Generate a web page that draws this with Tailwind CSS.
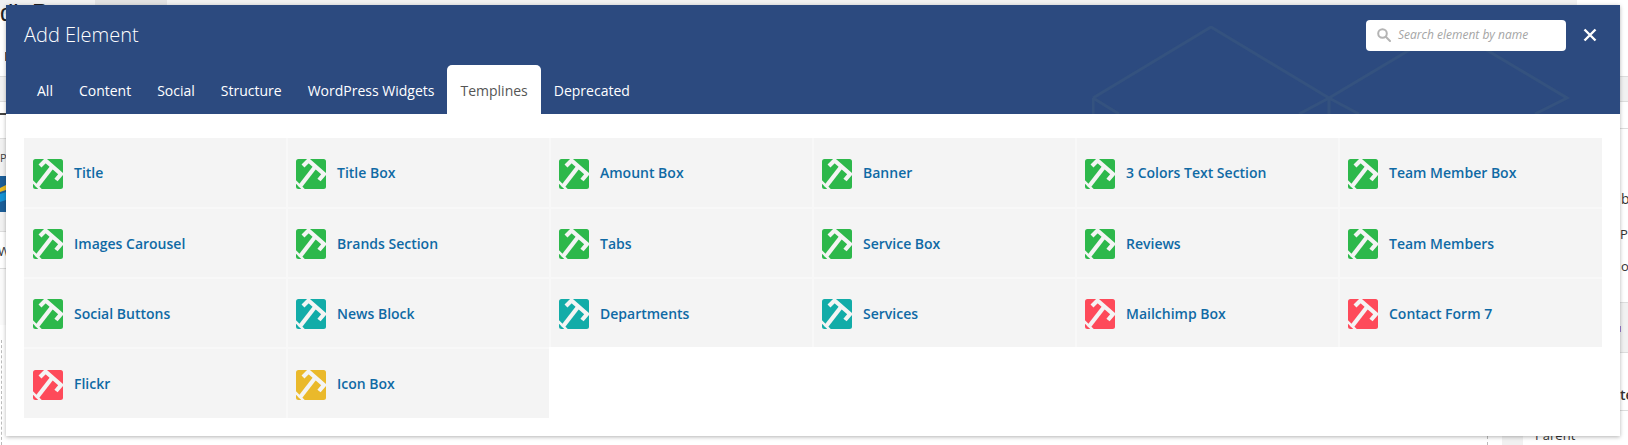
<!doctype html>
<html>
<head>
<meta charset="utf-8">
<script src="https://cdn.jsdelivr.net/npm/@tailwindcss/browser@4"></script>
</head>
<body class="m-0 h-[445px] w-[1628px] overflow-hidden bg-white font-['Open_Sans','Noto_Sans',sans-serif]">
<svg class="hidden"><defs>
<symbol id="i" viewBox="0 0 30 30"><rect width="30" height="30" rx="2.500" fill="currentColor"/><g fill="none" stroke="#f4f4f4"><path stroke-width="4.200" d="M7 7 L12.500 1.500 L28 15 L23 21"/><path stroke-width="4.200" d="M19 8 L3.500 28"/><path stroke-width="2.500" d="M-1 22 L8 31"/></g></symbol>
</defs></svg>
<div class="relative h-full w-full">
  <div class="absolute left-0 top-0 h-[14px] w-[1577px] bg-[#f1f1f1]"></div>
  <div class="absolute left-[95px] top-0 h-[5px] w-[72px] bg-[#e2e2e2]"></div>
  <div class="absolute left-0 top-[-5px] font-['Liberation_Sans',sans-serif] text-[24px] text-[#222]">dit P</div>
  <div class="absolute left-[5px] top-[52px] h-[9px] w-px bg-[#8a5a3c]"></div>
  <div class="absolute left-0 top-[76px] h-[26px] w-[6px] border-y border-[#ddd] bg-[#f1f1f1]"></div>
  <div class="absolute left-0 top-[113px] h-[2px] w-[6px] bg-[#444]"></div>
  <div class="absolute left-0 top-[138px] h-[38px] w-[6px] border-t border-[#ddd] bg-[#f1f1f1]"></div>
  <div class="absolute left-0 top-[150px] text-[11px] leading-4 text-[#444]">P</div>
  <svg class="absolute left-0 top-[176px]" width="6" height="36"><rect width="6" height="36" fill="#1b5e98"/><path d="M0 12 L6 9 V14 L0 16Z" fill="#e8b923"/><path d="M0 18 L6 16 V24 L0 26Z" fill="#1593d4"/></svg>
  <div class="absolute left-0 top-[212px] h-[20px] w-[6px] border-b border-[#ddd] bg-[#f1f1f1]"></div>
  <div class="absolute left-[-2px] top-[243px] text-[13px] leading-4 text-[#333]">W</div>
  <div class="absolute left-0 top-[268px] h-[57px] w-[6px] border-t border-[#ddd] bg-[#fafafa]"></div>
  <div class="absolute left-px top-[340px] h-[105px] w-px border-l border-dashed border-[#bbb]"></div>
  <div class="absolute left-[1620px] top-[14px] h-[14px] w-2 bg-white"></div>
  <div class="absolute left-[1620px] top-[76px] h-[26px] w-2 border-y border-[#ddd] bg-[#f1f1f1]"></div>
  <div class="absolute left-[1620px] top-[128px] h-px w-2 bg-[#ddd]"></div>
  <div class="absolute left-[1621px] top-[191px] text-[14px] leading-4 text-[#333]">b</div>
  <div class="absolute left-[1620px] top-[226px] text-[13px] leading-4 text-[#333]">Pu</div>
  <div class="absolute left-[1621px] top-[258px] text-[13px] leading-4 text-[#333]">o</div>
  <div class="absolute left-[1620px] top-[302px] h-[51px] w-2 border-y border-[#ddd] bg-[#f1f1f1]"></div>
  <div class="absolute left-[1620px] top-[326px] h-[6px] w-px bg-[#9b7fd0]"></div>
  <div class="absolute left-[1620px] top-[387px] text-[14px] font-semibold leading-4 text-[#333]">te</div>
  <div class="absolute left-[1620px] top-[410px] h-px w-2 bg-[#ddd]"></div>
  <div class="absolute left-[1502px] top-[436px] h-[9px] w-[21px] bg-[#f1f1f1]"></div>
  <div class="absolute left-[1487px] top-[436px] h-[9px] w-px border-l border-dashed border-[#bbb]"></div>
  <div class="absolute left-[1535px] top-[427px] text-[13px] leading-4 text-[#333]">Parent</div>

  <div class="absolute left-[6px] top-[5px] flex h-[431px] w-[1614px] flex-col bg-white shadow-[0_1px_4px_rgba(0,0,0,0.3)]">
    <div class="relative flex h-[109px] shrink-0 flex-col overflow-hidden bg-[#2c4a7f]">
      <svg class="absolute left-[1086px] top-[21px]" width="480" height="88" fill="none" stroke="#34527f" stroke-width="3"><path d="M1 72 L119 1 L237 72 L356 1 L475 72 L443 88 M1 72V88 M1 72 L27 88 M237 72 V88 M237 72 L207 88 M237 72 L267 88"/></svg>
      <div class="relative flex h-[60px] shrink-0 items-center justify-between pl-[18px] pr-[23px]">
        <h1 class="text-[20px] font-light text-white">Add Element</h1>
        <div class="flex items-center gap-[17px]">
          <div class="flex h-[31px] w-[200px] items-center gap-[7px] rounded-[4px] bg-white pl-[11px]">
            <svg width="14" height="14" viewBox="0 0 14 14" fill="none" stroke="#b4b4b4" stroke-width="2"><circle cx="5.500" cy="5.500" r="4.300"/><path d="M8.800 8.800 13 13" stroke-linecap="round"/></svg>
            <span class="text-[12px] italic text-[#a5a5a5]">Search element by name</span>
          </div>
          <svg width="14" height="14" viewBox="0 0 14 14" stroke="#fff" stroke-width="2.400"><path d="M1.500 1.500 12.500 12.500M12.500 1.500 1.500 12.500"/></svg>
        </div>
      </div>
      <nav class="relative flex h-[49px] items-stretch pl-[18px] text-[14px] font-medium text-white">
        <a class="flex items-center px-[13px] pt-[1px]">All</a>
        <a class="flex items-center px-[13px] pt-[1px]">Content</a>
        <a class="flex items-center px-[13px] pt-[1px]">Social</a>
        <a class="flex items-center px-[13px] pt-[1px]">Structure</a>
        <a class="flex items-center px-[13px] pt-[1px]">WordPress Widgets</a>
        <a class="flex items-center rounded-t-[5px] bg-white px-[13px] pt-[1px] font-normal text-[#555]">Templines</a>
        <a class="flex items-center px-[13px] pt-[1px]">Deprecated</a>
      </nav>
    </div>
    <div class="px-[18px] pt-[24px]">
      <div class="grid w-[1578px] grid-cols-[262px_261px_261px_261px_261px_262px] grid-rows-[69px_68px_68px_69px] gap-[2px] bg-[#f8f8f8] text-[14px] font-semibold text-[#0f6aa5]">
        <div class="flex items-center gap-[11px] bg-[#f4f4f4] pl-[9px]"><svg class="mt-[2px] h-[30px] w-[30px] shrink-0 text-[#2db84b]"><use href="#i"/></svg>Title</div>
        <div class="flex items-center gap-[11px] bg-[#f4f4f4] pl-[8px]"><svg class="mt-[2px] h-[30px] w-[30px] shrink-0 text-[#2db84b]"><use href="#i"/></svg>Title Box</div>
        <div class="flex items-center gap-[11px] bg-[#f4f4f4] pl-[8px]"><svg class="mt-[2px] h-[30px] w-[30px] shrink-0 text-[#2db84b]"><use href="#i"/></svg>Amount Box</div>
        <div class="flex items-center gap-[11px] bg-[#f4f4f4] pl-[8px]"><svg class="mt-[2px] h-[30px] w-[30px] shrink-0 text-[#2db84b]"><use href="#i"/></svg>Banner</div>
        <div class="flex items-center gap-[11px] bg-[#f4f4f4] pl-[8px]"><svg class="mt-[2px] h-[30px] w-[30px] shrink-0 text-[#2db84b]"><use href="#i"/></svg>3 Colors Text Section</div>
        <div class="flex items-center gap-[11px] bg-[#f4f4f4] pl-[8px]"><svg class="mt-[2px] h-[30px] w-[30px] shrink-0 text-[#2db84b]"><use href="#i"/></svg>Team Member Box</div>

        <div class="flex items-center gap-[11px] bg-[#f4f4f4] pl-[9px]"><svg class="mt-[2px] h-[30px] w-[30px] shrink-0 text-[#2db84b]"><use href="#i"/></svg>Images Carousel</div>
        <div class="flex items-center gap-[11px] bg-[#f4f4f4] pl-[8px]"><svg class="mt-[2px] h-[30px] w-[30px] shrink-0 text-[#2db84b]"><use href="#i"/></svg>Brands Section</div>
        <div class="flex items-center gap-[11px] bg-[#f4f4f4] pl-[8px]"><svg class="mt-[2px] h-[30px] w-[30px] shrink-0 text-[#2db84b]"><use href="#i"/></svg>Tabs</div>
        <div class="flex items-center gap-[11px] bg-[#f4f4f4] pl-[8px]"><svg class="mt-[2px] h-[30px] w-[30px] shrink-0 text-[#2db84b]"><use href="#i"/></svg>Service Box</div>
        <div class="flex items-center gap-[11px] bg-[#f4f4f4] pl-[8px]"><svg class="mt-[2px] h-[30px] w-[30px] shrink-0 text-[#2db84b]"><use href="#i"/></svg>Reviews</div>
        <div class="flex items-center gap-[11px] bg-[#f4f4f4] pl-[8px]"><svg class="mt-[2px] h-[30px] w-[30px] shrink-0 text-[#2db84b]"><use href="#i"/></svg>Team Members</div>

        <div class="flex items-center gap-[11px] bg-[#f4f4f4] pl-[9px]"><svg class="mt-[2px] h-[30px] w-[30px] shrink-0 text-[#2db84b]"><use href="#i"/></svg>Social Buttons</div>
        <div class="flex items-center gap-[11px] bg-[#f4f4f4] pl-[8px]"><svg class="mt-[2px] h-[30px] w-[30px] shrink-0 text-[#12aca8]"><use href="#i"/></svg>News Block</div>
        <div class="flex items-center gap-[11px] bg-[#f4f4f4] pl-[8px]"><svg class="mt-[2px] h-[30px] w-[30px] shrink-0 text-[#12aca8]"><use href="#i"/></svg>Departments</div>
        <div class="flex items-center gap-[11px] bg-[#f4f4f4] pl-[8px]"><svg class="mt-[2px] h-[30px] w-[30px] shrink-0 text-[#12aca8]"><use href="#i"/></svg>Services</div>
        <div class="flex items-center gap-[11px] bg-[#f4f4f4] pl-[8px]"><svg class="mt-[2px] h-[30px] w-[30px] shrink-0 text-[#fe4a5a]"><use href="#i"/></svg>Mailchimp Box</div>
        <div class="flex items-center gap-[11px] bg-[#f4f4f4] pl-[8px]"><svg class="mt-[2px] h-[30px] w-[30px] shrink-0 text-[#fe4a5a]"><use href="#i"/></svg>Contact Form 7</div>

        <div class="flex items-center gap-[11px] bg-[#f4f4f4] pl-[9px]"><svg class="mt-[2px] h-[30px] w-[30px] shrink-0 text-[#fe4a5a]"><use href="#i"/></svg>Flickr</div>
        <div class="flex items-center gap-[11px] bg-[#f4f4f4] pl-[8px]"><svg class="mt-[2px] h-[30px] w-[30px] shrink-0 text-[#eab92b]"><use href="#i"/></svg>Icon Box</div>
        <div class="col-span-4 -ml-[2px] -mt-[2px] bg-white"></div>
      </div>
    </div>
  </div>
</div>
</body>
</html>
